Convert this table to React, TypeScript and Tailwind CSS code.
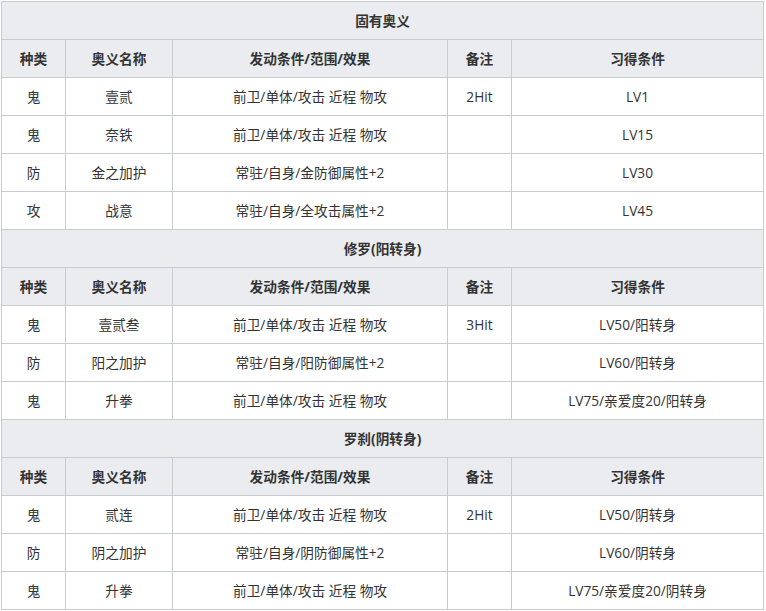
const head = ["种类", "奥义名称", "发动条件/范围/效果", "备注", "习得条件"];

type Row = [string, string, string, string, string];

const sections: { title: string; rows: Row[] }[] = [
  {
    title: "固有奥义",
    rows: [
      ["鬼", "壹贰", "前卫/单体/攻击 近程 物攻", "2Hit", "LV1"],
      ["鬼", "奈铁", "前卫/单体/攻击 近程 物攻", "", "LV15"],
      ["防", "金之加护", "常驻/自身/金防御属性+2", "", "LV30"],
      ["攻", "战意", "常驻/自身/全攻击属性+2", "", "LV45"],
    ],
  },
  {
    title: "修罗(阳转身)",
    rows: [
      ["鬼", "壹贰叁", "前卫/单体/攻击 近程 物攻", "3Hit", "LV50/阳转身"],
      ["防", "阳之加护", "常驻/自身/阳防御属性+2", "", "LV60/阳转身"],
      ["鬼", "升拳", "前卫/单体/攻击 近程 物攻", "", "LV75/亲爱度20/阳转身"],
    ],
  },
  {
    title: "罗刹(阴转身)",
    rows: [
      ["鬼", "贰连", "前卫/单体/攻击 近程 物攻", "2Hit", "LV50/阴转身"],
      ["防", "阴之加护", "常驻/自身/阴防御属性+2", "", "LV60/阴转身"],
      ["鬼", "升拳", "前卫/单体/攻击 近程 物攻", "", "LV75/亲爱度20/阴转身"],
    ],
  },
];

const cell = "border border-[#c8ccd1] h-[38px] px-0 pb-0 pt-[2px] text-center align-middle";

export default function App() {
  return (
    <div
      className="pl-px pt-px bg-white text-[13.7px] text-[#333]"
      style={{ fontFamily: '"Open Sans", "Noto Sans CJK SC", sans-serif' }}
    >
      <table className="table-fixed border-collapse w-[762px]">
        <colgroup>
          <col className="w-[64px]" />
          <col className="w-[107px]" />
          <col className="w-[275px]" />
          <col className="w-[64px]" />
          <col className="w-[252px]" />
        </colgroup>
        <tbody>
          {sections.map((s) => (
            <>
              <tr key={s.title} className="bg-[#eaecf0]">
                <th colSpan={5} className={`${cell} font-bold`}>
                  {s.title}
                </th>
              </tr>
              <tr className="bg-[#eaecf0]">
                {head.map((h) => (
                  <th key={h} className={`${cell} font-bold`}>
                    {h}
                  </th>
                ))}
              </tr>
              {s.rows.map((r, i) => (
                <tr key={s.title + i}>
                  {r.map((c, j) => (
                    <td key={j} className={cell}>
                      {c}
                    </td>
                  ))}
                </tr>
              ))}
            </>
          ))}
        </tbody>
      </table>
    </div>
  );
}
